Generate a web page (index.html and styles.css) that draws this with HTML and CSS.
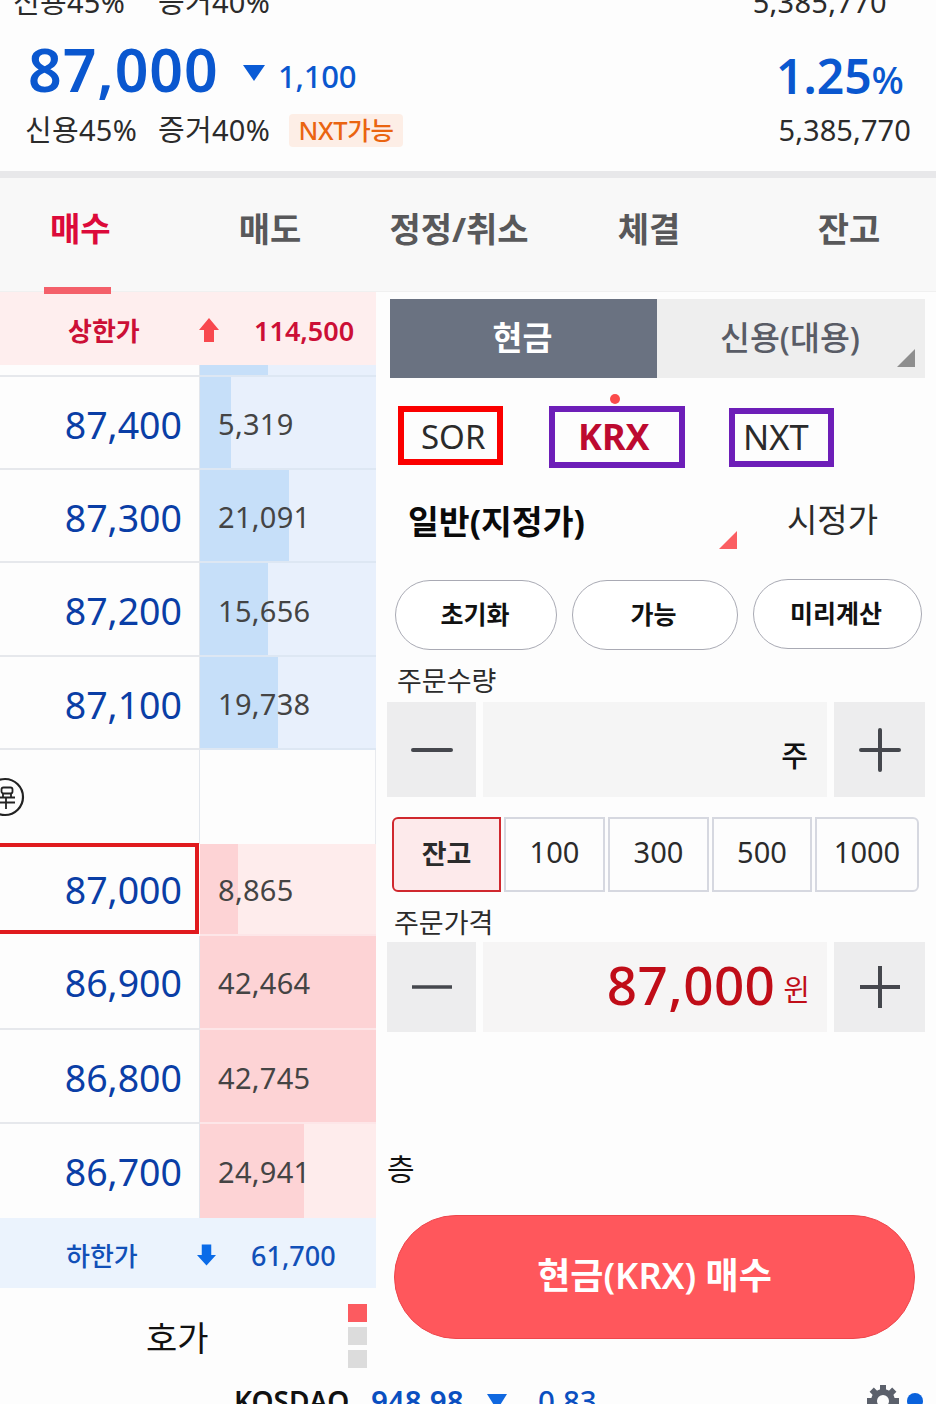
FILE: index.html
```html
<!DOCTYPE html>
<html lang="ko">
<head>
	<meta charset="UTF-8">
	<title>주식주문</title>
	<link rel="stylesheet" href="styles.css">
</head>
<body>
<div class="app">
	<div class="prev">
		<span class="rate">신용45%</span>
		<span class="rate">증거40%</span>
		<span class="vol">5,385,770</span>
	</div>
	<div class="quote">
		<div class="quote-left">
			<strong class="now">87,000</strong>
			<svg class="down" width="22" height="16" viewBox="0 0 22 16"><path d="M0 0h22L11 16z" fill="#0a5bd6"/></svg>
			<span class="diff">1,100</span>
		</div>
		<div class="percent">1.25<small>%</small></div>
	</div>
	<div class="info">
		<span class="rate">신용45%</span>
		<span class="rate">증거40%</span>
		<span class="nxt-badge">NXT가능</span>
		<span class="vol">5,385,770</span>
	</div>
	<div class="tabs">
		<div class="tab on"><span>매수</span></div>
		<div class="tab"><span>매도</span></div>
		<div class="tab"><span>정정/취소</span></div>
		<div class="tab"><span>체결</span></div>
		<div class="tab"><span>잔고</span></div>
	</div>
	<div class="main">
		<div class="book">
			<div class="limit upper">
				<span class="limit-name">상한가</span>
				<svg class="arrow" width="20" height="24" viewBox="0 0 20 24"><path d="M10 0l10 12h-5v12H5V12H0z" fill="#f8484e"/></svg>
				<span class="limit-price">114,500</span>
			</div>
			<div class="row sell r0"><div class="price"></div><div class="qty"><i style="width:68px"></i></div></div>
			<div class="row sell r1"><div class="price">87,400</div><div class="qty"><i style="width:31px"></i><span>5,319</span></div></div>
			<div class="row sell r2"><div class="price">87,300</div><div class="qty"><i style="width:89px"></i><span>21,091</span></div></div>
			<div class="row sell r3"><div class="price">87,200</div><div class="qty"><i style="width:68px"></i><span>15,656</span></div></div>
			<div class="row sell r4"><div class="price">87,100</div><div class="qty"><i style="width:78px"></i><span>19,738</span></div></div>
			<div class="row empty r5">
				<div class="price">
					<svg class="mark" width="25" height="40" viewBox="0 0 25 40">
						<circle cx="5" cy="20" r="18" fill="none" stroke="#222" stroke-width="2.2"/>
						<g fill="none" stroke="#222" stroke-width="1.8">
							<rect x="1.5" y="10.500" width="11" height="6" rx="2"/>
							<path d="M0 20.500h15M0 25.500h15M3 16.500v4M11 16.500v4M6 21v11"/>
						</g>
					</svg>
				</div>
				<div class="qty"></div>
			</div>
			<div class="row buy r6 current"><div class="price">87,000</div><div class="qty"><i style="width:38px"></i><span>8,865</span></div></div>
			<div class="row buy r7"><div class="price">86,900</div><div class="qty"><i style="width:100%"></i><span>42,464</span></div></div>
			<div class="row buy r8"><div class="price">86,800</div><div class="qty"><i style="width:100%"></i><span>42,745</span></div></div>
			<div class="row buy r9"><div class="price">86,700</div><div class="qty"><i style="width:104px"></i><span>24,941</span></div></div>
			<div class="limit lower">
				<span class="limit-name">하한가</span>
				<svg class="arrow" width="19" height="22" viewBox="0 0 20 22"><path d="M10 22L0 11h5V0h10v11h5z" fill="#0a6be8"/></svg>
				<span class="limit-price">61,700</span>
			</div>
			<div class="book-foot">
				<span class="book-name">호가</span>
				<div class="pages"><i class="on"></i><i></i><i></i></div>
			</div>
		</div>
		<div class="order">
			<div class="pay">
				<div class="pay-tab on">현금</div>
				<div class="pay-tab">신용(대용)<svg class="corner" width="18" height="18" viewBox="0 0 18 18"><path d="M18 0v18H0z" fill="#8e8e8e"/></svg></div>
			</div>
			<div class="market">
				<div class="mk sor">SOR</div>
				<div class="mk krx">KRX</div>
				<div class="mk nxt">NXT</div>
			</div>
			<div class="type">
				<span class="type-on">일반(지정가)</span>
				<svg class="type-corner" width="18" height="18" viewBox="0 0 18 18"><path d="M18 0v18H0z" fill="#fb5e62"/></svg>
				<span class="type-off">시정가</span>
			</div>
			<div class="pills">
				<div class="pill">초기화</div>
				<div class="pill">가능</div>
				<div class="pill calc">미리계산</div>
			</div>
			<div class="label">주문수량</div>
			<div class="stepper">
				<div class="step"><svg width="42" height="44" viewBox="0 0 42 44"><path d="M2 22h38" stroke="#45474d" stroke-width="4" stroke-linecap="round"/></svg></div>
				<div class="field"><span class="unit">주</span></div>
				<div class="step"><svg width="42" height="44" viewBox="0 0 42 44"><path d="M2 22h38M21 2v40" stroke="#45474d" stroke-width="4" stroke-linecap="round"/></svg></div>
			</div>
			<div class="chips">
				<div class="chip on">잔고</div>
				<div class="chip">100</div>
				<div class="chip">300</div>
				<div class="chip">500</div>
				<div class="chip">1000</div>
			</div>
			<div class="label second">주문가격</div>
			<div class="stepper price-step">
				<div class="step"><svg width="42" height="44" viewBox="0 0 42 44"><path d="M1 22h40" stroke="#45474d" stroke-width="3.5"/></svg></div>
				<div class="field"><span class="amount">87,000</span><span class="won">윈</span></div>
				<div class="step"><svg width="42" height="44" viewBox="0 0 42 44"><path d="M1 22h40M21 1v42" stroke="#45474d" stroke-width="4"/></svg></div>
			</div>
			<div class="note">층</div>
			<div class="submit">현금(KRX) 매수</div>
		</div>
	</div>
	<div class="ticker">
		<span class="index-name">KOSDAQ</span>
		<span class="index-val">948.98</span>
		<svg class="index-down" width="20" height="16" viewBox="0 0 20 16"><path d="M0 0h20L10 16z" fill="#1068e0"/></svg>
		<span class="index-diff">0.83</span>
		<svg class="gear" width="32" height="32" viewBox="0 0 32 32">
			<circle cx="16" cy="16" r="9" fill="none" stroke="#5b606b" stroke-width="6"/>
			<g stroke="#5b606b" stroke-width="6">
				<path d="M16 0v6M16 26v6M0 16h6M26 16h6M4.700 4.700l4.200 4.200M23.100 23.100l4.200 4.200M4.700 27.300l4.200-4.200M23.100 8.900l4.200-4.200"/>
			</g>
		</svg>
		<i class="dot"></i>
	</div>
</div>
</body>
</html>
```
FILE: styles.css
```css
*{
	margin: 0;
	padding: 0;
	box-sizing: border-box;
}
body{
	background: #fdfdfd;
	color: #2b2b2b;
	font-family: "Noto Sans", "Noto Sans CJK KR", sans-serif;
	overflow: hidden;
}
svg{display: block; flex: none;}
span, strong{white-space: nowrap;}
.app{width: 936px; height: 1404px; overflow: hidden;}

/* 종목 정보 */
.prev, .info{display: flex; align-items: center; font-size: 29px; letter-spacing: .3px;}
.prev{height: 20px; line-height: 20px; padding: 0 49px 17px 13px;}
.info{height: 61px; line-height: 40px; padding: 0 25px 21px 25px;}
.rate{width: 133px;}
.prev .rate{width: 145px;}
.vol{margin-left: auto;}
.info .vol{letter-spacing: .1px;}
.nxt-badge{height: 33px; width: 114px; margin-left: -2px; border-radius: 4px; background: #fdeee6; color: #ea6410; font-size: 25.500px; font-weight: 500; line-height: 33px; letter-spacing: -.3px; text-align: center;}
.quote{display: flex; justify-content: space-between; height: 90px; padding: 0 32px 0 28px; color: #0a57cf;}
.quote-left{display: flex; align-items: center; padding-top: 7px;}
.now{width: 215px; font-size: 59px; font-weight: 600; line-height: 90px; letter-spacing: .9px;}
.down{margin-top: 8px;}
.diff{margin: 14px 0 0 13px; font-size: 31px; font-weight: 500; letter-spacing: -.2px;}
.percent{padding-top: 11px; font-size: 48px; font-weight: 600; line-height: 90px;}
.percent small{font-size: 38px; font-weight: 500;}

/* 주문 탭 */
.tabs{display: grid; grid-template-columns: 160px 220px 158px 222px 178px; height: 121px; border-top: 7px solid #e8e8ea; border-bottom: 1px solid #f0f0f0; background: #f8f8f8;}
.tab{display: flex; justify-content: center; color: #58585a; font-size: 34px; font-weight: 700; line-height: 102px;}
.tab.on{color: #dc0a3a; font-size: 33px;}
/* 밑줄이 호가창 위로 걸친다 */
.tab.on span{position: relative; z-index: 1; width: 67px; height: 116px; margin-right: 5px; padding-left: 6px; border-bottom: 7px solid #f4606a;}

/* 호가창 */
.main{display: flex; height: 1085px;}
.book{width: 376px;}
.limit{display: flex; align-items: center; font-size: 27px;}
.limit.upper{height: 73px; padding: 3px 0 0 68px; background: #feeeee; color: #cc0f36; font-weight: 600;}
.limit.lower{height: 70px; padding: 4px 0 0 66px; background: #ebf3fd; color: #1150b8; font-weight: 500;}
.limit-name{width: 131px; padding-bottom: 1px; font-size: 26px;}
.limit-price{margin-left: 35px;}
.row{display: grid; grid-template-columns: 200px 176px; height: 93px;}
.price{display: flex; align-items: center; justify-content: flex-end; padding: 3px 17px 0 0; border-right: 1px solid #e2e6ec; border-bottom: 2px solid #e6e8ec; color: #0a3ea6; font-size: 37.500px;}
.qty{display: grid; align-items: center; color: #444; font-size: 29px; letter-spacing: .3px;}
.qty i, .qty span{grid-area: 1 / 1;}
.qty i{height: 100%;}
.qty span{padding: 2px 0 0 18px;}
.sell .qty{background: #e8f0fc; border-bottom: 2px solid #dde7f3;}
.sell .qty i{background: #c6dff9;}
.buy .qty{background: #feecec; border-bottom: 2px solid #fde6e8;}
.buy .qty i{background: #fdd3d5;}
.empty .qty{border-right: 1px solid #e8eaee;}
.r0{height: 12px;}
.r3, .r5, .r7, .r8, .r9{height: 94px;}
.r6{height: 92px;}
.buy .qty span{padding-top: 0;}
.r8 .qty span{padding-top: 3px;}
.r9 .price, .r9 .qty{border-bottom: 0;}
.empty .price{justify-content: flex-start; padding-top: 0; border-bottom: 0;}
.current .price{height: 91px; margin: -1px 1px 0 -4px; border: 4px solid #e01a1e; padding: 2px 13px 0 0;}
.r7 .price, .r9 .price{padding-top: 1px;}
.book-foot{display: flex; justify-content: space-between; padding: 16px 9px 0 146px;}
.book-name{color: #111; font-size: 34px; line-height: 68px;}
.pages i{display: block; width: 19px; height: 18px; margin-bottom: 5px; background: #dcdcdc;}
.pages i.on{background: #fc5b60;}

/* 주문 입력 */
.order{width: 560px; padding: 7px 11px 0 11px;}
.pay{display: grid; grid-template-columns: 267px 268px; height: 79px; margin-left: 3px;}
.pay-tab{position: relative; padding-right: 2px; background: #eee; color: #595c66; font-size: 32.500px; font-weight: 500; line-height: 78px; text-align: center;}
.pay-tab.on{background: #6a7281; color: #fff; font-weight: 700;}
.corner{position: absolute; right: 10px; bottom: 11px;}
.market{display: flex; align-items: flex-start; height: 98px; padding: 28px 0 0 11px;}
.mk{position: relative; height: 59px; border: 6px solid #6d1eb8; color: #2b2b2b; font-size: 34px; line-height: 49px;}
.sor{width: 105px; border-color: #fb0000; padding-left: 17px; font-size: 33px;}
.krx{width: 136px; height: 62px; margin-left: 46px; padding-left: 23px; color: #bd0a30; font-size: 36px; font-weight: 700;}
.krx::before{content: ""; position: absolute; left: 55px; top: -18px; width: 10px; height: 10px; border-radius: 50%; background: #fb4b4b;}
.nxt{width: 105px; margin: 2px 0 0 44px; padding-left: 8px; font-size: 34.500px; line-height: 46px;}
.type{display: flex; height: 104px; padding-left: 21px; font-size: 33.500px; line-height: 90px;}
.type-on{width: 311px; color: #0a0a0a; font-weight: 700;}
.type-corner{margin-top: 55px;}
.type-off{margin-left: 50px; font-size: 33px; line-height: 88px;}
.pills{display: flex; height: 79px; padding-left: 8px;}
.pill{width: 162px; height: 70px; padding-right: 2px; border: 1.500px solid #a9aab4; border-radius: 35px; background: #fff; color: #111; font-size: 25px; font-weight: 700; line-height: 67px; text-align: center;}
.pill + .pill{width: 166px; margin-left: 15px; padding-right: 3px;}
.pill.calc{width: 169px; margin-top: -1px;}
.label{height: 43px; padding-left: 10px; font-size: 27px; line-height: 43px;}
.stepper{display: grid; grid-template-columns: 89px 344px 91px; column-gap: 7px; height: 95px;}
.step{display: flex; align-items: center; justify-content: center; background: #ededee;}
.field{display: flex; align-items: center; justify-content: flex-end; padding-right: 19px; background: #f5f5f5;}
.unit{padding-top: 8px; color: #111; font-size: 29px; font-weight: 500;}
.chips{display: grid; grid-template-columns: 109px 101px 101px 100px 104px; column-gap: 3px; height: 75px; margin: 20px 0 9px 5px;}
.chip{border: 2px solid #d6d8e0; font-size: 29px; line-height: 66px; text-align: center;}
.chip.on{border-color: #d0282e; border-radius: 6px 0 0 6px; background: #fdeaeb; font-size: 27px; font-weight: 700; line-height: 69px;}
.chip:last-child{border-radius: 0 6px 6px 0;}
.label.second{height: 41px; padding-left: 7px; line-height: 43px;}
.price-step{height: 90px;}
.price-step .field{padding-right: 17px; background: #f6f5f5;}
.amount{padding-bottom: 5px; color: #c00d18; font-size: 53px; font-weight: 500; letter-spacing: .4px;}
.won{margin-left: 8px; padding-top: 2px; color: #c00d18; font-size: 29px;}
.note{margin-top: 117px; height: 66px; color: #111; font-size: 30px; line-height: 40px;}
.submit{width: 521px; height: 124px; margin-left: 7px; border: 1px solid #ee464c; border-radius: 62px; background: #ff575c; color: #fff; font-size: 36px; font-weight: 600; line-height: 119px; text-align: center;}

/* 하단 지수 */
.ticker{display: flex; height: 40px; padding: 6px 0 0 234px; font-size: 28px; font-weight: 600; line-height: 36px;}
.index-name{width: 137px; color: #111;}
.index-val{width: 116px; color: #0a4fc0; font-size: 29.500px;}
.index-down{margin-top: 11px;}
.index-diff{margin-left: 31px; color: #0a4fc0; font-size: 29.500px; font-weight: 500;}
.gear{margin: 2px 0 0 auto;}
.dot{width: 16px; height: 16px; margin: 10px 13px 0 8px; border-radius: 50%; background: #0a62dc;}
```
